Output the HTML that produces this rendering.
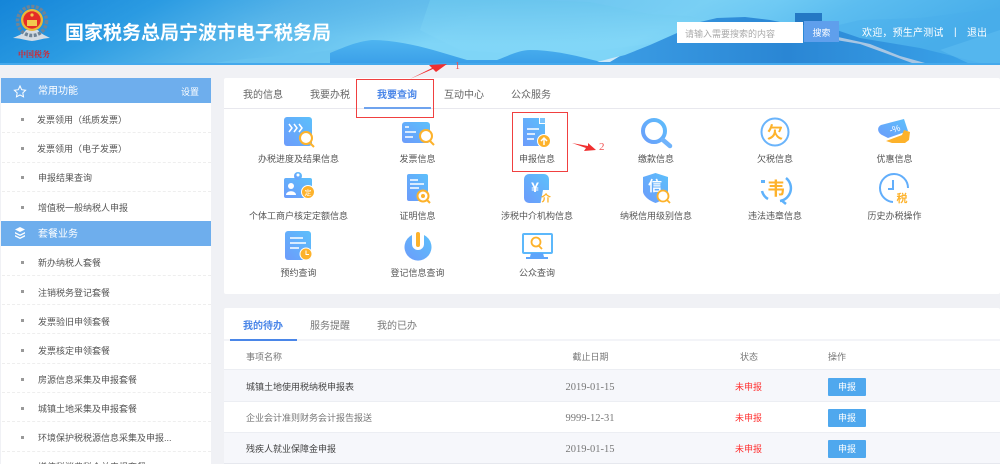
<!DOCTYPE html>
<html lang="zh-CN"><head><meta charset="utf-8"><title>国家税务总局宁波市电子税务局</title>
<style>
*{box-sizing:border-box;margin:0;padding:0}
html{background:#f0f1f5}
html,body{width:1000px;height:464px;overflow:hidden}
body{position:relative;font-family:"Liberation Sans","Noto Sans CJK SC",sans-serif;color:#555;filter:blur(.3px)}
.t{position:absolute;white-space:nowrap;line-height:14px;height:14px}
.c{transform:translateX(-50%)}
.box{position:absolute;background:#fff}
.side{font-size:9px;color:#555;margin-top:1px}
.dash{position:absolute;left:2px;width:209px;border-top:1px dashed #eee}
.dot{position:absolute;left:21px;width:3px;height:3px;background:#999}
.head{position:absolute;left:1px;width:210px;background:#6eaeed}
.lab{font-size:9px;color:#555;margin-top:1px}
.tab{font-size:10px;color:#666;margin-top:2px}
.row{position:absolute;left:224px;width:776px}
.btn{position:absolute;left:828px;width:38px;height:18px;background:#4fa8ee;border-radius:1px;color:#fff;font-size:9px;line-height:18px;text-align:center}
.st{color:#f33;font-size:9px}
.red{position:absolute;border:1.5px solid #f04040}
.th{font-size:9px;color:#777;margin-top:1px}
.date{font-size:10.5px;color:#777;font-family:'Liberation Serif',serif;margin-top:1px}
</style></head><body>

<svg style="position:absolute;left:0;top:0" width="1000" height="65" viewBox="0 0 1000 65">
<defs>
<linearGradient id="sky" x1="0" y1="0" x2="1" y2="0.12">
<stop offset="0" stop-color="#1585d8"/><stop offset=".16" stop-color="#2b9be2"/><stop offset=".3" stop-color="#58b6ea"/><stop offset=".5" stop-color="#7fd5f7"/><stop offset=".7" stop-color="#7fd5f7"/><stop offset=".85" stop-color="#5cbdf0"/><stop offset="1" stop-color="#48aeea"/>
</linearGradient>
<radialGradient id="shade" gradientUnits="userSpaceOnUse" cx="500" cy="0" r="1" gradientTransform="translate(500 0) scale(280 45) translate(-500 0)"><stop offset="0" stop-color="#1272c8" stop-opacity=".2"/><stop offset="1" stop-color="#1272c8" stop-opacity="0"/></radialGradient>
<linearGradient id="mt" x1="0" y1="0" x2="1" y2="0"><stop offset="0" stop-color="#3d9fe6"/><stop offset=".5" stop-color="#2a86d4"/><stop offset="1" stop-color="#3ba4ea"/></linearGradient>
<linearGradient id="fade" x1="0" y1="0" x2="0" y2="1"><stop offset="0" stop-color="#6ac6ee" stop-opacity=".85"/><stop offset="1" stop-color="#8fdffb" stop-opacity=".1"/></linearGradient>
<linearGradient id="hill" x1="0" y1="0" x2="0" y2="1"><stop offset="0" stop-color="#4eb4f0"/><stop offset="1" stop-color="#3a9fe8"/></linearGradient>
</defs>
<rect width="1000" height="65" fill="url(#sky)"/>
<rect width="1000" height="50" fill="url(#shade)"/>
<path d="M430 0 L530 0 L590 2 L650 14 L690 16 L720 22 L680 40 L600 50 L520 54 L460 50 L420 30Z" fill="url(#fade)"/>
<path d="M800 34 L860 20 L920 18 L1000 8 L1000 65 L880 65Z" fill="#48aceb" opacity=".4"/>
<path d="M210 64 C250 56 290 58 350 47 L352 64Z" fill="#69c3f0" opacity=".7"/>
<path d="M330 64 L330 53 C345 47 355 42 372 40 C395 40 420 46 440 52 L467 60 L497 60 C510 55 520 50 530 50 C550 50 570 54 593 60 L610 64Z" fill="url(#hill)"/>
<path d="M590 64 L625 55 L650 45 L677 33 L700 22 L717 18 L745 17 L770 20 L795 25 L822 25 L860 38 L920 48 L985 64Z" fill="url(#mt)"/>
<path d="M940 50 L1000 30 L1000 64 L970 64Z" fill="#5ab9f0" opacity=".7"/>
<rect x="795" y="13" width="27" height="12" fill="#2478c4"/>
<path d="M838 37 L870 44 L900 56 L925 63 L912 63 L885 53 L860 44 L836 40Z" fill="#a8c6e3"/>
<path d="M597 62 L620 56 L610 62Z" fill="#cfe9f8"/>
<rect y="63" width="1000" height="2" fill="#45a9ec"/>
</svg>

<svg style="position:absolute;left:0;top:0" width="70" height="64" viewBox="0 0 70 64">
<path d="M13 38 C20 35 24 33 26 30 L38 30 C40 33 44 35 50 38 C44 38 40 40 32 41 C24 40 19 38 13 38Z" fill="#d5dde4"/>
<circle cx="32" cy="21" r="14.5" fill="none" stroke="#6f8496" stroke-width="3.5" stroke-dasharray="3 1.5"/>
<circle cx="32" cy="20" r="11" fill="#e9b93a"/>
<circle cx="32" cy="20" r="8.7" fill="#e52d27"/>
<rect x="27" y="20" width="10" height="6" fill="#f3c94e"/>
<circle cx="32" cy="15" r="1.6" fill="#f3c94e"/>
</svg>
<div class="t" style="left:18px;top:48px;font-size:8px;line-height:14px;color:#d8232a;font-family:'Liberation Serif','Noto Serif CJK SC',serif;font-weight:700">中国税务</div>

<div class="t" style="left:65px;top:22px;height:24px;line-height:24px;font-size:19px;font-weight:700;color:#fff">国家税务总局宁波市电子税务局</div>

<div class="box" style="left:677px;top:22px;width:126px;height:21px"></div>
<div class="t" style="left:685px;top:27px;font-size:9px;color:#aaa">请输入需要搜索的内容</div>
<div class="box" style="left:804px;top:21px;width:35px;height:21px;background:#5f9fec"></div>
<div class="t c" style="left:821.5px;top:26px;font-size:9px;color:#fff">搜索</div>
<div class="t" style="left:862px;top:27px;font-size:10px;color:#fff;letter-spacing:.2px">欢迎，预生产测试</div>
<div class="t" style="left:954px;top:26px;font-size:10px;color:#fff">|</div>
<div class="t" style="left:967px;top:27px;font-size:10px;color:#fff">退出</div>

<!-- sidebar -->
<div class="box" style="left:1px;top:78px;width:210px;height:386px"></div>
<div class="head" style="top:78px;height:25px"></div>
<div class="head" style="top:221px;height:25px"></div>
<svg style="position:absolute;left:0;top:78px" width="40" height="170" viewBox="0 0 40 170">
<path d="M20 8 L21.700 11.700 L25.600 12.200 L22.800 14.900 L23.500 18.800 L20 16.900 L16.500 18.800 L17.200 14.900 L14.400 12.200 L18.300 11.700Z" fill="none" stroke="#fff" stroke-width="1"/>
<path d="M20 149 L25 151.500 L20 154 L15 151.500Z M15 154 L20 156.500 L25 154 L25 155.500 L20 158 L15 155.500Z M15 157 L20 159.500 L25 157 L25 158.500 L20 161 L15 158.500Z" fill="#fff"/>
</svg>
<div class="t" style="left:38px;top:85px;font-size:10px;color:#fff">常用功能</div>
<div class="t" style="left:181px;top:85px;font-size:9px;color:#fff">设置</div>
<div class="t" style="left:38px;top:228px;font-size:10px;color:#fff">套餐业务</div>

<div class="t side" style="left:37px;top:112px">发票领用（纸质发票）</div><div class="dot" style="top:118px"></div><div class="dash" style="top:132px"></div>
<div class="t side" style="left:37px;top:141px">发票领用（电子发票）</div><div class="dot" style="top:147px"></div><div class="dash" style="top:162px"></div>
<div class="t side" style="left:38px;top:170px">申报结果查询</div><div class="dot" style="top:176px"></div><div class="dash" style="top:191px"></div>
<div class="t side" style="left:38px;top:200px">增值税一般纳税人申报</div><div class="dot" style="top:206px"></div>
<div class="t side" style="left:38px;top:255px">新办纳税人套餐</div><div class="dot" style="top:261px"></div><div class="dash" style="top:275px"></div>
<div class="t side" style="left:38px;top:285px">注销税务登记套餐</div><div class="dot" style="top:290px"></div><div class="dash" style="top:304px"></div>
<div class="t side" style="left:38px;top:314px">发票验旧申领套餐</div><div class="dot" style="top:319px"></div><div class="dash" style="top:333px"></div>
<div class="t side" style="left:38px;top:343px">发票核定申领套餐</div><div class="dot" style="top:349px"></div><div class="dash" style="top:363px"></div>
<div class="t side" style="left:38px;top:372px">房源信息采集及申报套餐</div><div class="dot" style="top:378px"></div><div class="dash" style="top:392px"></div>
<div class="t side" style="left:38px;top:401px">城镇土地采集及申报套餐</div><div class="dot" style="top:407px"></div><div class="dash" style="top:421px"></div>
<div class="t side" style="left:38px;top:430px">环境保护税税源信息采集及申报...</div><div class="dot" style="top:436px"></div><div class="dash" style="top:451px"></div>
<div class="t side" style="left:38px;top:459px">增值税消费税合并申报套餐</div>

<!-- query card -->
<div class="box" style="left:224px;top:78px;width:776px;height:216px;border-radius:2px"></div>
<div style="position:absolute;left:224px;top:108px;width:776px;height:1px;background:#e8e8ee"></div>
<div class="t tab" style="left:243px;top:87px">我的信息</div>
<div class="t tab" style="left:310px;top:87px">我要办税</div>
<div class="t tab" style="left:377px;top:87px;color:#4a86e8;font-weight:700">我要查询</div>
<div class="t tab" style="left:444px;top:87px">互动中心</div>
<div class="t tab" style="left:511px;top:87px">公众服务</div>
<div style="position:absolute;left:364px;top:107px;width:67px;height:2px;background:#6fa3ee"></div>

<svg style="position:absolute;left:0;top:0" width="1000" height="300" viewBox="0 0 1000 300" font-family="'Liberation Sans','Noto Sans CJK SC',sans-serif">
<defs>
<linearGradient id="b" x1="1" y1="0" x2="0" y2="1"><stop offset="0" stop-color="#5cc0fb"/><stop offset="1" stop-color="#6c9bfb"/></linearGradient>
<linearGradient id="s" gradientUnits="userSpaceOnUse" x1="670" y1="120" x2="640" y2="145"><stop offset="0" stop-color="#5cc0fb"/><stop offset="1" stop-color="#6c9bfb"/></linearGradient>
</defs>
<!-- 1 -->
<rect x="284" y="117" width="28" height="29" rx="3" fill="url(#b)"/>
<path d="M289 124l3 4-3 4M294 124l3 4-3 4M299 124l3 4-3 4" fill="none" stroke="#fff" stroke-width="1.500"/>
<circle cx="306" cy="138" r="6" fill="#fff" stroke="#fdb22b" stroke-width="2"/><path d="M310 143l4 4" stroke="#fdb22b" stroke-width="2"/>
<!-- 2 -->
<rect x="402" y="122" width="28" height="21" rx="3" fill="url(#b)"/>
<path d="M405 127h4M405 132h11M405 137h8" stroke="#fff" stroke-width="1.500"/>
<circle cx="426" cy="136" r="6" fill="#fff" stroke="#fdb22b" stroke-width="2"/><path d="M430 141l4 4" stroke="#fdb22b" stroke-width="2"/>
<!-- 3 -->
<path d="M523 118H539V124H545V146H523Z" fill="url(#b)"/><rect x="540" y="118" width="5" height="5" fill="#7cc4fb"/>
<path d="M527 129h12M527 134h8M527 139h7" stroke="#fff" stroke-width="1.500"/>
<circle cx="544" cy="141" r="6.500" fill="#fdb22b" stroke="#fff"/><path d="M544 145v-7M541 141l3-3 3 3" stroke="#fff" stroke-width="1.500" fill="none"/>
<!-- 4 -->
<rect x="284" y="178" width="28" height="20" rx="2" fill="url(#b)"/>
<circle cx="298" cy="176" r="4" fill="url(#b)"/><circle cx="298" cy="175" r="1.500" fill="#fff"/>
<circle cx="291" cy="186" r="3" fill="#fff"/><path d="M286 195c0-5 10-5 10 0Z" fill="#fff"/>
<circle cx="308" cy="192" r="6.500" fill="#fdb22b" stroke="#fff"/><text x="308" y="195" font-size="7" fill="#fff" text-anchor="middle">定</text>
<!-- 5 -->
<rect x="407" y="174" width="21" height="27" rx="2" fill="url(#b)"/>
<path d="M410 180h8M410 184h14M410 188h9" stroke="#fff" stroke-width="1.500"/>
<circle cx="423" cy="196" r="5.500" fill="#fff" stroke="#fdb22b" stroke-width="2"/><circle cx="423" cy="196" r="2" fill="#fdb22b"/><path d="M427 200l3 3" stroke="#fdb22b" stroke-width="2"/>
<!-- 6 -->
<rect x="524" y="174" width="25" height="29" rx="5" fill="url(#b)"/>
<text x="535" y="192" font-size="14" font-weight="700" fill="#fff" text-anchor="middle">¥</text>
<path d="M543 190h8v16h-11z" fill="#fff"/>
<text x="546" y="202" font-size="10" font-weight="700" fill="#fdb22b" text-anchor="middle">介</text>
<!-- 7 -->
<rect x="285" y="231" width="26" height="29" rx="3" fill="url(#b)"/>
<path d="M290 238h13M290 243h16M290 248h9" stroke="#fff" stroke-width="1.500"/>
<circle cx="306" cy="254" r="6" fill="#fdb22b" stroke="#fff"/><path d="M306 250.500v4h3" stroke="#fff" fill="none"/>
<!-- 8 -->
<path d="M412 235a13.500 13.500 0 1 0 12 0v9a6 6 0 1 1-12 0Z" fill="url(#b)"/>
<rect x="416" y="232" width="4" height="15" rx="2" fill="#fdb22b"/>
<!-- 9 -->
<rect x="523" y="234" width="29" height="19" rx="1" fill="#fff" stroke="#5cb8fb" stroke-width="2"/>
<path d="M531 253h12l1 4h4v2h-22v-2h4Z" fill="#5da5fb"/>
<circle cx="536" cy="242" r="4.500" fill="none" stroke="#fdb22b" stroke-width="1.800"/><path d="M539 246l3 3" stroke="#fdb22b" stroke-width="1.800"/>
<!-- 10 -->
<circle cx="654" cy="131" r="11" fill="none" stroke="url(#s)" stroke-width="4"/><path d="M663 140l7 6" stroke="#6fb3fb" stroke-width="4.500" stroke-linecap="round"/>
<!-- 11 -->
<circle cx="775" cy="132" r="13.500" fill="none" stroke="#6ab4fb" stroke-width="2"/>
<text x="775" y="138" font-size="16" font-weight="700" fill="#fdb22b" text-anchor="middle">欠</text>
<!-- 12 -->
<path d="M881 125L904 119L908 131L888 138L882 135C877 132 877 127 881 125Z" fill="url(#b)"/>
<text x="895" y="132" font-size="9" fill="#fff" text-anchor="middle" transform="rotate(-15 895 130)">-%</text>
<path d="M886 141L902 135L904 130L910 132L909 140L905 143H892Z" fill="#fdb22b"/>
<!-- 13 -->
<path d="M655.500 173L668 177V192C667 198 661 201 655.500 203C650 201 644 197 643 192V177Z" fill="url(#b)"/>
<text x="655" y="191" font-size="14" font-weight="700" fill="#fff" text-anchor="middle">信</text>
<circle cx="663" cy="196" r="5.500" fill="#fff" stroke="#fdb22b" stroke-width="1.800"/><path d="M667 200l3 3" stroke="#fdb22b" stroke-width="1.800"/>
<!-- 14 -->
<path d="M786 178A13 13 0 0 1 780 201M768 199A13 13 0 0 1 762 191" fill="none" stroke="#5fb2fb" stroke-width="2.500"/>
<rect x="761" y="180" width="4" height="3" fill="#5fb2fb"/><path d="M781 200l5 4" stroke="#5fb2fb" stroke-width="2.500"/>
<text x="776" y="195" font-size="18" font-weight="700" fill="#fdb22b" text-anchor="middle">韦</text>
<!-- 15 -->
<path d="M908 188A14 14 0 1 0 893 202" fill="none" stroke="#62aefb" stroke-width="2"/>
<path d="M893 180v9h-5" fill="none" stroke="#62aefb" stroke-width="2"/>
<text x="902" y="202" font-size="11" font-weight="700" fill="#fdb22b" text-anchor="middle">税</text>
</svg>

<div class="t lab c" style="left:298.500px;top:151px">办税进度及结果信息</div>
<div class="t lab c" style="left:417.500px;top:151px">发票信息</div>
<div class="t lab c" style="left:537px;top:151px">申报信息</div>
<div class="t lab c" style="left:656px;top:151px">缴款信息</div>
<div class="t lab c" style="left:775px;top:151px">欠税信息</div>
<div class="t lab c" style="left:894.500px;top:151px">优惠信息</div>
<div class="t lab c" style="left:298.500px;top:208px">个体工商户核定定额信息</div>
<div class="t lab c" style="left:417.500px;top:208px">证明信息</div>
<div class="t lab c" style="left:537px;top:208px">涉税中介机构信息</div>
<div class="t lab c" style="left:656px;top:208px">纳税信用级别信息</div>
<div class="t lab c" style="left:775px;top:208px">违法违章信息</div>
<div class="t lab c" style="left:894.500px;top:208px">历史办税操作</div>
<div class="t lab c" style="left:298.500px;top:265px">预约查询</div>
<div class="t lab c" style="left:417.500px;top:265px">登记信息查询</div>
<div class="t lab c" style="left:537px;top:265px">公众查询</div>

<!-- todo card -->
<div class="box" style="left:224px;top:308px;width:776px;height:156px;border-radius:2px"></div>
<div class="row" style="top:339px;height:2px;background:#f3f4f8"></div>
<div style="position:absolute;left:230px;top:339px;width:67px;height:1.500px;background:#4a86e8"></div>
<div class="t tab" style="left:243px;top:318px;color:#4a86e8;font-weight:700">我的待办</div>
<div class="t tab" style="left:310px;top:318px;color:#777">服务提醒</div>
<div class="t tab" style="left:377px;top:318px;color:#777">我的已办</div>

<div class="t th" style="left:246px;top:349px">事项名称</div>
<div class="t th c" style="left:590.500px;top:349px">截止日期</div>
<div class="t th c" style="left:749px;top:349px">状态</div>
<div class="t th" style="left:828px;top:349px">操作</div>

<div class="row" style="top:369px;height:1px;background:#eceef3"></div>
<div class="row" style="top:370px;height:31px;background:#f6f7fb"></div>
<div class="row" style="top:401px;height:1px;background:#eceef3"></div>
<div class="row" style="top:432px;height:1px;background:#eceef3"></div>
<div class="row" style="top:433px;height:30px;background:#f6f7fb"></div>
<div class="row" style="top:463px;height:1px;background:#e6e8ee"></div>

<div class="t" style="left:246px;top:380px;font-size:9px;color:#444">城镇土地使用税纳税申报表</div>
<div class="t" style="left:246px;top:411px;font-size:9px;color:#777">企业会计准则财务会计报告报送</div>
<div class="t" style="left:246px;top:442px;font-size:9px;color:#444">残疾人就业保障金申报</div>
<div class="t date c" style="left:590px;top:380px">2019-01-15</div>
<div class="t date c" style="left:590px;top:411px">9999-12-31</div>
<div class="t date c" style="left:590px;top:442px">2019-01-15</div>
<div class="t st c" style="left:748.500px;top:380px">未申报</div>
<div class="t st c" style="left:748.500px;top:411px">未申报</div>
<div class="t st c" style="left:748.500px;top:442px">未申报</div>
<div class="btn" style="top:378px">申报</div>
<div class="btn" style="top:409px">申报</div>
<div class="btn" style="top:440px">申报</div>

<!-- annotations -->
<div class="red" style="left:356px;top:79px;width:78px;height:39px"></div>
<div class="red" style="left:512px;top:112px;width:56px;height:60px"></div>
<svg style="position:absolute;left:0;top:0" width="1000" height="200" viewBox="0 0 1000 200">
<path d="M410 79L432 68L429 65L447 64L436 72L433 69Z" fill="#f03030"/>
<path d="M572 143L588 146L588 143L596 150L584 151L586 148Z" fill="#f03030"/>
</svg>
<div class="t" style="left:455px;top:60px;font-size:10px;color:#f05050;font-family:'Liberation Serif',serif">1</div>
<div class="t" style="left:599px;top:140px;font-size:11px;color:#f05050;font-family:'Liberation Serif',serif">2</div>
</body></html>
